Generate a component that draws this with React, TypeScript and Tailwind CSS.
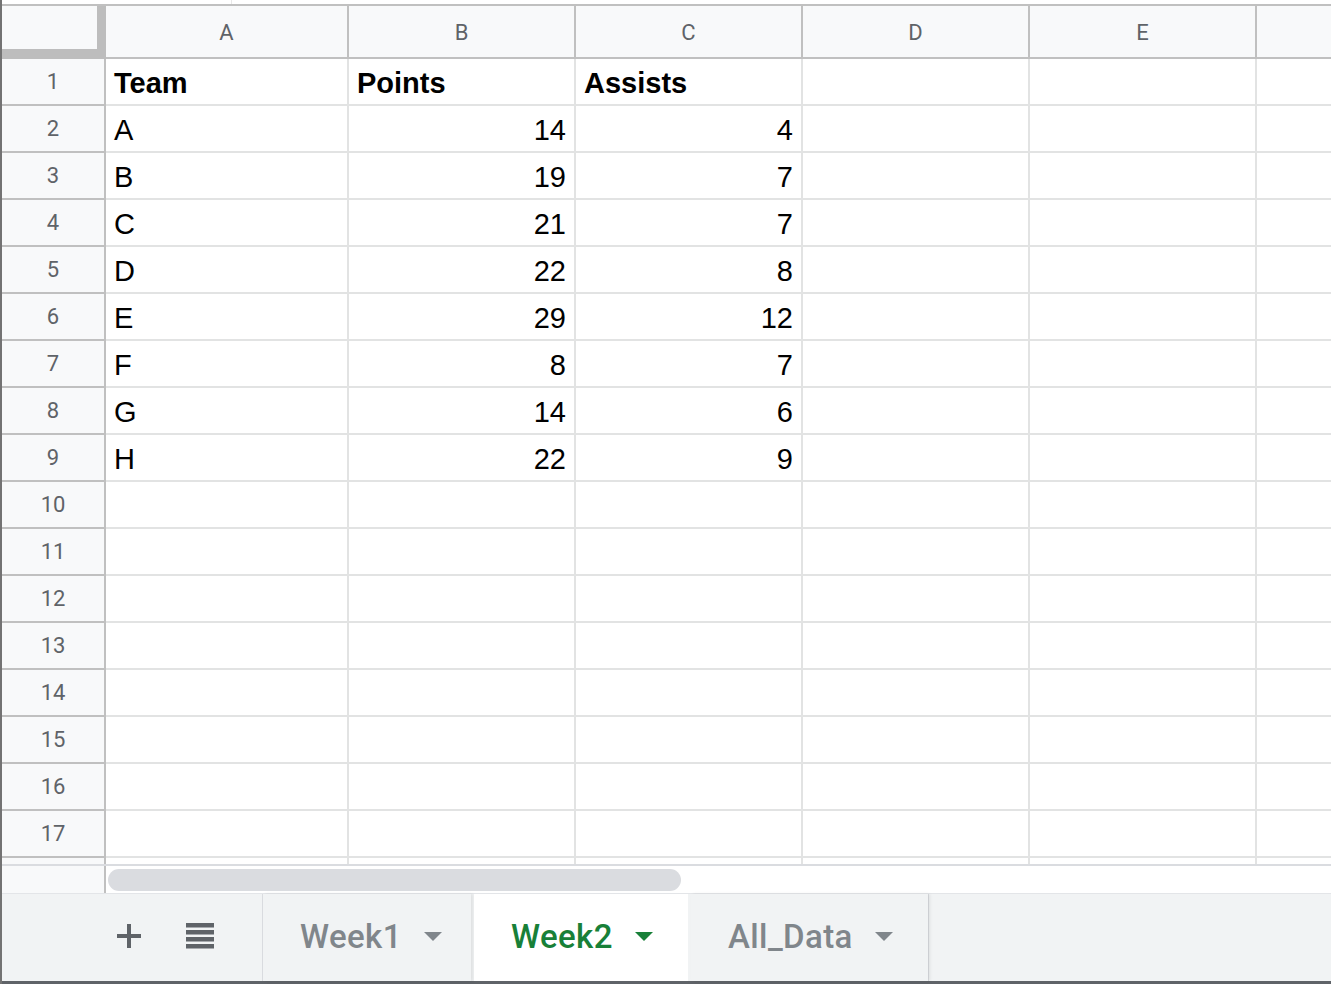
import React from "react";

const cols = ["A", "B", "C", "D", "E", ""];
const colWidths = ["w-[243px]", "w-[227px]", "w-[227px]", "w-[227px]", "w-[227px]", "flex-1"];

type Cell = { v: string; bold?: boolean; right?: boolean };

const data: Cell[][] = [
  [{ v: "Team", bold: true }, { v: "Points", bold: true }, { v: "Assists", bold: true }],
  [{ v: "A" }, { v: "14", right: true }, { v: "4", right: true }],
  [{ v: "B" }, { v: "19", right: true }, { v: "7", right: true }],
  [{ v: "C" }, { v: "21", right: true }, { v: "7", right: true }],
  [{ v: "D" }, { v: "22", right: true }, { v: "8", right: true }],
  [{ v: "E" }, { v: "29", right: true }, { v: "12", right: true }],
  [{ v: "F" }, { v: "8", right: true }, { v: "7", right: true }],
  [{ v: "G" }, { v: "14", right: true }, { v: "6", right: true }],
  [{ v: "H" }, { v: "22", right: true }, { v: "9", right: true }],
];

function Caret({ color }: { color: string }) {
  return (
    <svg width="18" height="9" viewBox="0 0 18 9">
      <polygon points="0,0 18,0 9,9" fill={color} />
    </svg>
  );
}

function Tab({ label, active, w }: { label: string; active?: boolean; w: string }) {
  return (
    <div
      className={`${w} h-full flex items-center pl-[37px] gap-[22px] pb-[3px] ${
        active ? "bg-white text-[#188038]" : "bg-[#f1f3f4] text-[#80868b] shadow-[2px_0_3px_rgba(0,0,0,0.08)]"
      }`}
    >
      <span className="text-[33px] tracking-[0.4px] font-medium font-['Roboto',sans-serif] leading-none">{label}</span>
      <Caret color={active ? "#188038" : "#80868b"} />
    </div>
  );
}

export default function App() {
  const rows = Array.from({ length: 17 }, (_, i) => i);
  return (
    <div className="w-[1331px] h-[984px] overflow-hidden bg-white border-l-2 border-[#737373] flex flex-col">
      {/* top strip */}
      <div className="h-[6px] shrink-0 border-b-2 border-[#c0c0c0] flex">
        <div className="w-[230px] border-r border-[#e8e8e8]" />
      </div>

      {/* column headers */}
      <div className="h-[53px] shrink-0 flex">
        <div className="w-[104px] h-full bg-[#bdbdbd] shrink-0">
          <div className="w-[95px] h-[43px] bg-[#f8f9fa]" />
        </div>
        {cols.map((c, i) => (
          <div
            key={i}
            className={`${colWidths[i]} shrink-0 h-full bg-[#f8f9fa] border-b-2 border-[#c0c0c0] ${
              i < 5 ? "border-r-2" : ""
            } flex items-center justify-center pt-[2px] text-[22px] text-[#5f6368] font-['Roboto',sans-serif]`}
          >
            {c}
          </div>
        ))}
      </div>

      {/* rows */}
      {rows.map((r) => (
        <div key={r} className="h-[47px] shrink-0 flex">
          <div className="w-[104px] shrink-0 bg-[#f8f9fa] border-r-2 border-b-2 border-[#c0c0c0] flex items-center justify-center text-[22px] text-[#5f6368] font-['Roboto',sans-serif]">
            {r + 1}
          </div>
          {cols.map((_, i) => {
            const cell = data[r]?.[i];
            return (
              <div
                key={i}
                className={`${colWidths[i]} shrink-0 border-b-2 border-[#e2e3e3] ${
                  i < 5 ? "border-r-2" : ""
                } flex items-center px-2 pt-[4px] text-[29px] text-black font-['Liberation_Sans',Arial,sans-serif] ${
                  cell?.right ? "justify-end" : "justify-start"
                } ${cell?.bold ? "font-bold" : ""}`}
              >
                {cell?.v}
              </div>
            );
          })}
        </div>
      ))}

      {/* partial row */}
      <div className="h-[8px] shrink-0 flex border-b-2 border-[#dadce0]">
        <div className="w-[104px] shrink-0 bg-[#f8f9fa] border-r-2 border-[#c0c0c0]" />
        {cols.map((_, i) => (
          <div key={i} className={`${colWidths[i]} shrink-0 ${i < 5 ? "border-r-2 border-[#e2e3e3]" : ""}`} />
        ))}
      </div>

      {/* horizontal scrollbar */}
      <div className="h-[27px] shrink-0 flex">
        <div className="w-[104px] shrink-0 bg-[#f8f9fa] border-r-2 border-[#c0c0c0]" />
        <div className="flex-1 pl-[2px] pt-[3px]">
          <div className="w-[573px] h-[22px] rounded-full bg-[#dadce0]" />
        </div>
      </div>

      {/* sheet tabs */}
      <div className="h-[91px] shrink-0 bg-[#f1f3f4] border-t border-[#e3e5e8] border-b-[3px] border-b-[#5f6368] flex">
        <div className="w-[261px] h-full border-r border-[#dadce0] flex items-center pl-[115px] gap-[45px] pb-[3px]">
          <svg width="24" height="24" viewBox="0 0 24 24">
            <rect x="0" y="10" width="24" height="4" fill="#5f6368" />
            <rect x="10" y="0" width="4" height="24" fill="#5f6368" />
          </svg>
          <svg width="28" height="26" viewBox="0 0 28 26">
            <rect x="0" y="0" width="28" height="4.5" fill="#5f6368" />
            <rect x="0" y="7" width="28" height="4.5" fill="#5f6368" />
            <rect x="0" y="14" width="28" height="4.5" fill="#5f6368" />
            <rect x="0" y="21" width="28" height="4.5" fill="#5f6368" />
          </svg>
        </div>
        <Tab label="Week1" w="w-[208px]" />
        <div className="w-[3px]" />
        <Tab label="Week2" w="w-[214px]" active />
        <div className="w-[3px]" />
        <div className="w-[238px] h-full border-r border-[#dadce0] flex">
          <Tab label="All_Data" w="w-full" />
        </div>
      </div>
    </div>
  );
}
